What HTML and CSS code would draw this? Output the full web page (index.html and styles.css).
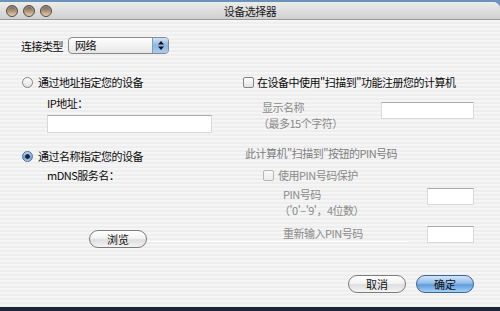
FILE: index.html
```html
<!DOCTYPE html>
<html lang="zh-CN">

<head>
    <meta charset="UTF-8">
    <title>设备选择器</title>
    <link rel="stylesheet" href="styles.css">
</head>

<body>
    <div class="screen">
        <div class="window">
            <div class="titlebar">
                <div class="lights">
                    <span class="light"></span>
                    <span class="light"></span>
                    <span class="light"></span>
                </div>
                <div class="title">设备选择器</div>
                <div></div>
            </div>

            <div class="content">
                <div class="conn-row">
                    <span>连接类型</span>
                    <div class="popup">
                        <span class="popup-text">网络</span>
                        <span class="popup-arrows">
                            <svg width="8" height="11" viewBox="0 0 8 11">
                                <path d="M4 1 L7 4.5 H1 Z" fill="#111" />
                                <path d="M4 10 L7 6.5 H1 Z" fill="#111" />
                            </svg>
                        </span>
                    </div>
                </div>

                <div class="columns">
                    <div class="col-left">
                        <div class="radio-row">
                            <span class="radio"></span>
                            <span>通过地址指定您的设备</span>
                        </div>
                        <div class="field-label">IP地址：</div>
                        <div class="text-input ip-input"></div>

                        <div class="radio-row radio-row-2">
                            <span class="radio on"></span>
                            <span>通过名称指定您的设备</span>
                        </div>
                        <div class="field-label mdns-label">mDNS服务名：</div>

                        <div class="browse-row">
                            <button class="btn">浏览</button>
                            <span class="rule"></span>
                        </div>
                    </div>

                    <div class="col-right">
                        <div class="check-row">
                            <span class="checkbox"></span>
                            <span>在设备中使用"扫描到"功能注册您的计算机</span>
                        </div>

                        <div class="name-row">
                            <div class="muted two-line">
                                <div>显示名称</div>
                                <div class="paren-line">（最多15个字符）</div>
                            </div>
                            <div class="text-input name-input"></div>
                        </div>

                        <div class="section-label">此计算机"扫描到"按钮的PIN号码</div>

                        <div class="check-row pin-check muted">
                            <span class="checkbox off"></span>
                            <span>使用PIN号码保护</span>
                        </div>

                        <div class="pin-row">
                            <div class="muted two-line">
                                <div>PIN号码</div>
                                <div class="paren-line">（'0'–'9'，4位数）</div>
                            </div>
                            <div class="text-input pin-input"></div>
                        </div>

                        <div class="pin-row reenter-row">
                            <div class="muted">重新输入PIN号码</div>
                            <div class="text-input pin-input"></div>
                        </div>
                    </div>
                </div>

                <div class="footer">
                    <button class="btn">取消</button>
                    <button class="btn primary">确定</button>
                </div>
            </div>
        </div>
        <div class="dock"></div>
    </div>
</body>

</html>
```

FILE: styles.css
```css
* {
    box-sizing: border-box;
}

body {
    margin: 0;
    font-family: "Noto Sans CJK SC", "Noto Sans", sans-serif;
    font-size: 11px;
    letter-spacing: -0.5px;
    color: #0a0a0a;
}

.screen {
    width: 500px;
    height: 311px;
    background: #6a93bc;
    display: flex;
    flex-direction: column;
    overflow: hidden;
}

.window {
    flex: 1;
    margin-top: 2px;
    border-top-right-radius: 7px;
    overflow: hidden;
    display: flex;
    flex-direction: column;
    background: repeating-linear-gradient(#eeeeee 0 2px, #f5f5f5 2px 4px);
}

.titlebar {
    height: 18px;
    flex-shrink: 0;
    display: grid;
    grid-template-columns: 1fr auto 1fr;
    align-items: center;
    background: linear-gradient(#ececec, #dedede 50%, #d0d0d0);
    border-bottom: 1px solid #9a9a9a;
}

.lights {
    display: flex;
    gap: 5px;
    padding-left: 6px;
}

.light {
    width: 12px;
    height: 12px;
    border-radius: 50%;
    border: 1px solid #4e4a46;
    background: linear-gradient(#6e5d4c, #b59879 55%, #e6d3b8);
    box-shadow: inset 0 1px 1px rgba(255, 255, 255, 0.35);
}

.title {
    color: #1a1a1a;
    line-height: 14px;
}

.content {
    flex: 1;
    padding: 17px 26px 0 21px;
    display: flex;
    flex-direction: column;
}

.conn-row {
    display: flex;
    align-items: center;
    gap: 5px;
    height: 17px;
}

.popup {
    width: 101px;
    height: 17px;
    display: flex;
    border: 1px solid #8a8a8a;
    border-radius: 4px;
    overflow: hidden;
    background: linear-gradient(#ffffff, #f3f3f3 50%, #e6e6e6);
}

.popup-text {
    flex: 1;
    padding-left: 6px;
    line-height: 15px;
}

.popup-arrows {
    width: 16px;
    display: flex;
    align-items: center;
    justify-content: center;
    border-left: 1px solid #7c9cc4;
    background: linear-gradient(#cfe2f6, #8fb7e4 50%, #a9cbef);
}

.columns {
    display: flex;
    margin-top: 21px;
}

.col-left {
    width: 221px;
    padding-left: 1px;
}

.col-right {
    flex: 1;
}

.radio-row,
.check-row {
    display: flex;
    align-items: center;
    height: 14px;
    line-height: 14px;
}

.radio-row {
    gap: 5px;
}

.radio-row-2 {
    margin-top: 16px;
}

.radio {
    width: 11px;
    height: 11px;
    border-radius: 50%;
    border: 1px solid #858585;
    background: linear-gradient(#fdfdfd, #e0e0e0);
}

.radio.on {
    border-color: #4f6e99;
    background: radial-gradient(circle, #1c2634 0 2px, transparent 2.6px),
        linear-gradient(#bcd6f3, #6f9fd6 60%, #a8caef);
}

.field-label {
    margin-top: 7px;
    padding-left: 25px;
    line-height: 14px;
}

.mdns-label {
    margin-top: 5px;
}

.text-input {
    height: 18px;
    background: #fff;
    border: 1px solid #dadada;
    border-top-color: #ababab;
}

.ip-input {
    margin-top: 5px;
    margin-left: 25px;
    width: 165px;
}

.browse-row {
    display: flex;
    align-items: center;
    margin-top: 48px;
    padding-left: 67px;
}

.rule {
    flex-shrink: 0;
    width: 260px;
    height: 1px;
    margin-top: 4px;
    background: #ffffff;
}

.btn {
    width: 58px;
    height: 18px;
    padding: 0;
    flex-shrink: 0;
    border-radius: 9px;
    border: 1px solid #7c7c7c;
    background: linear-gradient(#ffffff, #f3f3f3 45%, #dedede 55%, #f4f4f4);
    font: inherit;
    letter-spacing: 0;
    color: #111;
    line-height: 15px;
}

.btn.primary {
    border-color: #3d6594;
    background: linear-gradient(#d3e6f9, #92bde9 45%, #5f9bd9 55%, #a3d2f7);
}

.check-row {
    gap: 3px;
    padding-left: 1px;
}

.checkbox {
    width: 11px;
    height: 11px;
    border: 1px solid #858585;
    border-radius: 2px;
    background: linear-gradient(#ffffff, #e2e2e2);
}

.checkbox.off {
    border-color: #b5b5b5;
    background: linear-gradient(#fafafa, #ececec);
}

.muted {
    color: #8a8a8a;
}

.two-line {
    line-height: 16px;
    margin-top: -2px;
}

.name-row {
    display: flex;
    justify-content: space-between;
    align-items: flex-start;
    margin-top: 12px;
    padding-left: 20px;
    line-height: 14px;
}

.paren-line {
    margin-left: -4px;
}

.name-input {
    width: 93px;
    height: 17px;
    margin-top: 1px;
}

.section-label {
    margin-top: 15px;
    padding-left: 3px;
    line-height: 14px;
    color: #7e7e7e;
}

.pin-check {
    margin-top: 8px;
    padding-left: 21px;
    gap: 4px;
}

.pin-row {
    display: flex;
    justify-content: space-between;
    align-items: flex-start;
    margin-top: 6px;
    padding-left: 41px;
    line-height: 13px;
}

.pin-input {
    width: 47px;
    height: 17px;
    margin-top: 0;
}

.reenter-row {
    margin-top: 8px;
    line-height: 14px;
}

.footer {
    display: flex;
    justify-content: flex-end;
    gap: 10px;
    margin-top: 27px;
}

.dock {
    height: 4px;
    flex-shrink: 0;
    background: #1b2636;
}
```
